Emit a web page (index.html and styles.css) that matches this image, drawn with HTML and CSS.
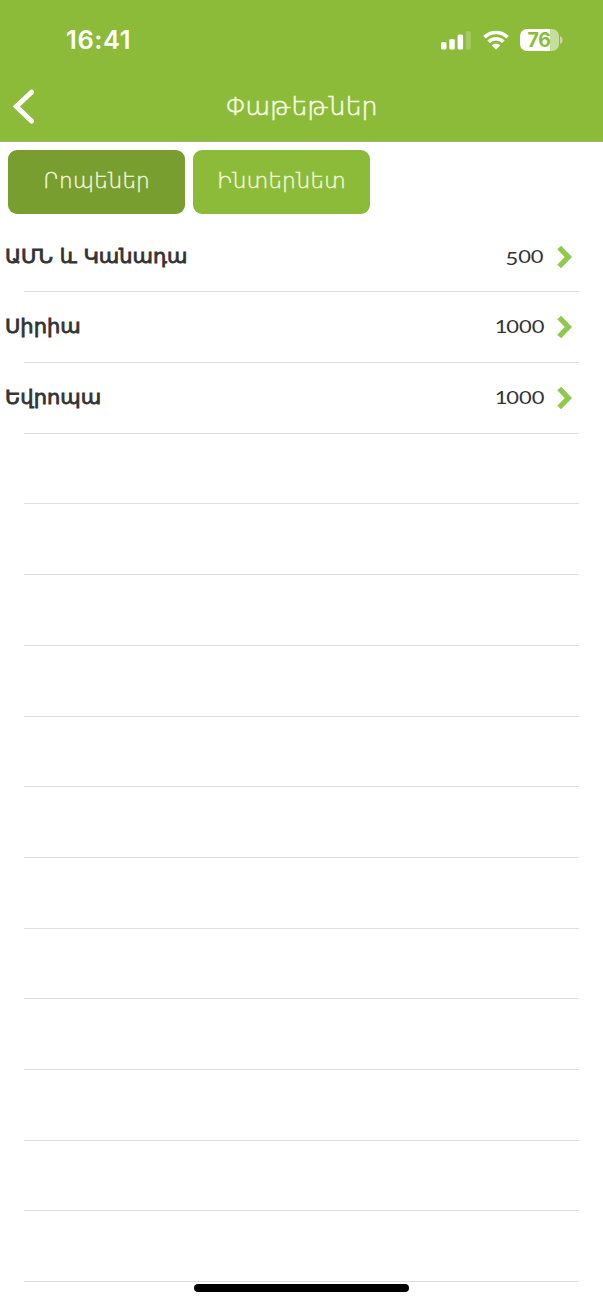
FILE: index.html
```html
<!DOCTYPE html>
<html lang="hy">
<head>
<meta charset="utf-8">
<title>Փաթեթներ</title>
<link rel="stylesheet" href="styles.css">
</head>
<body>
<header class="header">
  <div class="status">
    <span class="time">16:41</span>
    <div class="indicators">
      <svg class="signal" width="30" height="20" viewBox="0 0 30 20" fill="#fff"><rect x="0" y="12" width="5.5" height="7.5" rx="1.6"/><rect x="8.3" y="9" width="5.5" height="10.5" rx="1.6"/><rect x="16.6" y="4.5" width="5.5" height="15" rx="1.6"/><rect x="24.7" y="1" width="5" height="18.5" rx="1.6" opacity=".22"/></svg>
      <svg class="wifi" width="26" height="20" viewBox="0 0 26 20" fill="none" stroke="#fff" stroke-width="3.6"><path d="M1.5 7.3a16.3 16.3 0 0 1 23 0M5.6 11.8a10.5 10.5 0 0 1 14.8 0"/><path d="M13 19.7l-4.3-4.4a6 6 0 0 1 8.6 0z" fill="#fff" stroke="none"/></svg>
      <div class="battery"><span class="level">76</span></div>
      <svg class="cap" width="3" height="8" viewBox="0 0 3 8"><path d="M0 0q2.6 1 2.6 4T0 8z" fill="#fff" opacity=".5"/></svg>
    </div>
  </div>
  <div class="nav">
    <svg class="back" width="22" height="36" viewBox="0 0 22 36"><path d="M18.5 3.2L3.4 17.5L18.5 32" fill="none" stroke="#fff" stroke-width="5" stroke-linecap="round" stroke-linejoin="miter"/></svg>
    <h1 class="title">Փաթեթներ</h1>
  </div>
</header>
<nav class="tabs">
  <button class="tab tab-active">Րոպեներ</button>
  <button class="tab">Ինտերնետ</button>
</nav>
<main class="list">
  <div class="row"><span class="name">ԱՄՆ և Կանադա</span><span class="amount"><span class="low">5</span>00</span><svg class="chevron" width="16" height="24" viewBox="0 0 16 24"><path d="M2.2 2.5L11.3 12L2.2 21.5" fill="none" stroke="#8fca4d" stroke-width="5.4"/></svg></div>
  <div class="row"><span class="name">Սիրիա</span><span class="amount"><span class="one">1</span>000</span><svg class="chevron" width="16" height="24" viewBox="0 0 16 24"><path d="M2.2 2.5L11.3 12L2.2 21.5" fill="none" stroke="#8fca4d" stroke-width="5.4"/></svg></div>
  <div class="row"><span class="name">Եվրոպա</span><span class="amount"><span class="one">1</span>000</span><svg class="chevron" width="16" height="24" viewBox="0 0 16 24"><path d="M2.2 2.5L11.3 12L2.2 21.5" fill="none" stroke="#8fca4d" stroke-width="5.4"/></svg></div>
  <div class="row"></div><div class="row"></div><div class="row"></div><div class="row"></div>
  <div class="row"></div><div class="row"></div><div class="row"></div><div class="row"></div>
  <div class="row"></div><div class="row"></div><div class="row"></div><div class="row"></div>
</main>
<div class="home"></div>
</body>
</html>
```
FILE: styles.css
```css
* { box-sizing: border-box; }
body {
  margin: 0;
  height: 1304px;
  overflow: hidden;
  position: relative;
  background: #fff;
  font-family: "DejaVu Sans", sans-serif;
}
.header {
  height: 141.5px;
  background: #8cbb3a;
  color: #fff;
  border-bottom: 1px solid #9bb96a;
}
.status {
  height: 72px;
  padding: 8px 40.5px 0 66px;
  display: flex;
  align-items: center;
  justify-content: space-between;
}
.time { font: 600 25.5px/34px Inter, sans-serif; letter-spacing: 0.6px; }
.indicators { display: flex; align-items: center; }
.wifi { margin: 0 11px 0 12px; }
.battery {
  width: 39px;
  height: 22px;
  border-radius: 7px;
  background: linear-gradient(to right, #fff 30px, #c5dd9d 30px);
  color: #8cbb3a;
  text-align: center;
}
.level { font: 700 19.5px/22px Inter, sans-serif; letter-spacing: -0.3px; }
.cap { margin-left: 1px; }
.nav {
  height: 69px;
  display: grid;
  grid-template-columns: 60px 1fr 60px;
  align-items: center;
}
.back { margin-left: 13px; }
.title {
  margin: 0;
  padding-bottom: 2px;
  text-align: center;
  font-size: 25.4px;
  font-weight: 200;
  line-height: 32px;
  color: #f8fce4;
  -webkit-text-stroke: 0.6px #f8fce4;
}
.tabs { display: flex; gap: 8px; padding: 8px 8px 0; height: 80.2px; }
.tab {
  width: 177px;
  height: 64px;
  padding: 0 0 2px;
  border: 0;
  border-radius: 9px;
  background: #8cbb3a;
  color: #f8fce0;
  font: 200 21.7px/60px "DejaVu Sans", sans-serif;
  -webkit-text-stroke: 0.35px #f8fce0;
}
.tab-active { background: #789e2f; }
.row {
  height: 70.69px;
  margin: 0 24px;
  border-bottom: 1px solid #dedede;
  display: flex;
  align-items: center;
  color: #333;
}
.name {
  margin-left: -19px;
  margin-right: auto;
  padding-bottom: 2px;
  font-size: 20px;
  font-weight: 400;
  -webkit-text-stroke: 0.8px #333;
  white-space: nowrap;
  transform: scaleX(1.05);
  transform-origin: left;
}
.amount {
  font: 400 17px/24px Lato, sans-serif;
  transform: scaleX(1.29);
  transform-origin: right;
}
.low { display: inline-block; transform: translateY(2px); }
.one { margin-right: -1px; }
.chevron { margin: 0 6px 0 13px; }
.home {
  position: absolute;
  left: 194px;
  bottom: 12px;
  width: 215px;
  height: 8px;
  border-radius: 4px;
  background: #000;
}
```
